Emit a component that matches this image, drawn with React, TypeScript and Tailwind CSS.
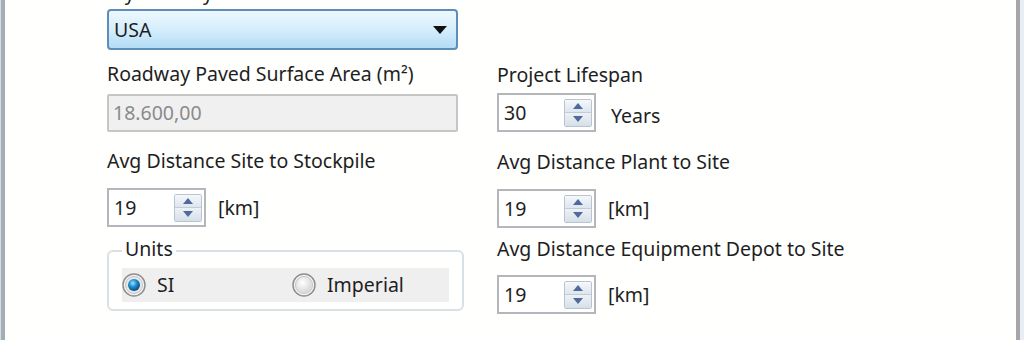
import React from 'react'

const font = { fontFamily: '"Noto Sans", "Open Sans", Arial, sans-serif' }

function SpinArrows() {
  return (
    <div className="flex flex-col w-[28px] h-[28px] border border-[#b9c4d0] rounded-[2px] overflow-hidden">
      <div className="flex-1 flex items-center justify-center bg-gradient-to-b from-[#f5f8fb] to-[#dde5ee] border-b border-[#c2ccd7]">
        <svg width="10" height="6" viewBox="0 0 10 6">
          <path d="M0 6 L5 0 L10 6 Z" fill="#4f6b9c" />
        </svg>
      </div>
      <div className="flex-1 flex items-center justify-center bg-gradient-to-b from-[#eef2f7] to-[#d6dfe9]">
        <svg width="10" height="6" viewBox="0 0 10 6">
          <path d="M0 0 L10 0 L5 6 Z" fill="#4f6b9c" />
        </svg>
      </div>
    </div>
  )
}

function Spinner({ value, unit, unitClass }: { value: string; unit: string; unitClass: string }) {
  return (
    <div className="flex items-center">
      <div className="w-[99px] h-[39px] border-2 border-[#b4b6bb] bg-white flex items-center justify-between pl-[5px] pr-[2px]">
        <span className="text-[19.5px] text-[#1e1e1e]">{value}</span>
        <SpinArrows />
      </div>
      <span className={`text-[19.5px] text-[#1e1e1e] ${unitClass}`}>{unit}</span>
    </div>
  )
}

function Radio({ checked }: { checked: boolean }) {
  return (
    <svg width="24" height="24" viewBox="0 0 24 24">
      <defs>
        <radialGradient id={checked ? 'rOn' : 'rOff'} cx="40%" cy="35%" r="70%">
          {checked ? (
            <>
              <stop offset="0%" stopColor="#9fe2ff" />
              <stop offset="45%" stopColor="#1c8fd0" />
              <stop offset="100%" stopColor="#0a3f6e" />
            </>
          ) : (
            <>
              <stop offset="0%" stopColor="#ffffff" />
              <stop offset="100%" stopColor="#d6d6d6" />
            </>
          )}
        </radialGradient>
      </defs>
      <circle cx="12" cy="12" r="11" fill="#f4f4f4" stroke="#8e8f8f" strokeWidth="1.5" />
      <circle cx="12" cy="12" r="8.5" fill="#e6e6e6" stroke="#c4c4c4" strokeWidth="1" />
      <circle cx="12" cy="12" r={checked ? 6 : 7.5} fill={`url(#${checked ? 'rOn' : 'rOff'})`} />
    </svg>
  )
}

export default function App() {
  return (
    <div style={font} className="w-[1024px] h-[340px] bg-white flex overflow-hidden">
      <div className="w-[1px] bg-[#d8dde3]" />
      <div className="w-[4px] bg-[#a3adb8]" />
      <div className="flex-1 flex pl-[102px] bg-[#fffffe]">
        <div className="w-[351px] flex flex-col">
          <div className="h-[9px] overflow-hidden relative">
            <span className="absolute bottom-[4px] left-0 text-[19.5px] leading-[24px] text-[#1e1e1e] whitespace-nowrap">My Country</span>
          </div>
          <div className="h-[41px] rounded-[4px] border-2 border-[#5f8dba] bg-gradient-to-b from-[#eef8fe] via-[#d5eefc] to-[#b3dcf5] flex items-center justify-between pl-[5px] pr-[9px]">
            <span className="text-[19.5px] text-[#1e1e1e]">USA</span>
            <svg width="14" height="8" viewBox="0 0 14 8">
              <path d="M0 0 L14 0 L7 8 Z" fill="#111" />
            </svg>
          </div>
          <div className="mt-[12px] h-[24px] leading-[24px] text-[19.5px] text-[#1e1e1e] whitespace-nowrap">Roadway Paved Surface Area (m²)</div>
          <div className="mt-[8px] h-[38px] border-2 border-[#c6c6c6] rounded-[2px] bg-[#f0f0f0] flex items-center pl-[4px]">
            <span className="text-[19.5px] text-[#8a8a8a]">18.600,00</span>
          </div>
          <div className="mt-[17px] h-[24px] leading-[24px] text-[19.5px] text-[#1e1e1e] whitespace-nowrap">Avg Distance Site to Stockpile</div>
          <div className="mt-[15px]">
            <Spinner value="19" unit="[km]" unitClass="ml-[12px]" />
          </div>
          <div className="mt-[23px] w-[357px] h-[61px] border-2 border-[#d9e0e6] rounded-[6px] relative px-[13px] pt-[16px]">
            <span className="absolute -top-[15px] left-[13px] bg-white px-[3px] text-[19.5px] leading-[24px] text-[#1e1e1e]">Units</span>
            <div className="h-[34px] bg-[#efefef] flex items-center">
              <div className="flex items-center w-[170px]">
                <Radio checked />
                <span className="ml-[11px] text-[19.5px] text-[#1e1e1e]">SI</span>
              </div>
              <div className="flex items-center">
                <Radio checked={false} />
                <span className="ml-[11px] text-[19.5px] text-[#1e1e1e]">Imperial</span>
              </div>
            </div>
          </div>
        </div>
        <div className="ml-[39px] flex flex-col">
          <div className="mt-[63px] h-[24px] leading-[24px] text-[19.5px] text-[#1e1e1e] whitespace-nowrap">Project Lifespan</div>
          <div className="mt-[6px]">
            <Spinner value="30" unit="Years" unitClass="ml-[15px] mt-[6px]" />
          </div>
          <div className="mt-[18px] h-[24px] leading-[24px] text-[19.5px] text-[#1e1e1e] whitespace-nowrap">Avg Distance Plant to Site</div>
          <div className="mt-[15px]">
            <Spinner value="19" unit="[km]" unitClass="ml-[12px]" />
          </div>
          <div className="mt-[9px] h-[24px] leading-[24px] text-[19.5px] text-[#1e1e1e] whitespace-nowrap">Avg Distance Equipment Depot to Site</div>
          <div className="mt-[14px]">
            <Spinner value="19" unit="[km]" unitClass="ml-[12px]" />
          </div>
        </div>
        <div className="flex-1" />
        <div className="w-[4px] bg-[#a6a6a6]" />
        <div className="w-[4px] bg-[#e8eef4]" />
      </div>
    </div>
  )
}
